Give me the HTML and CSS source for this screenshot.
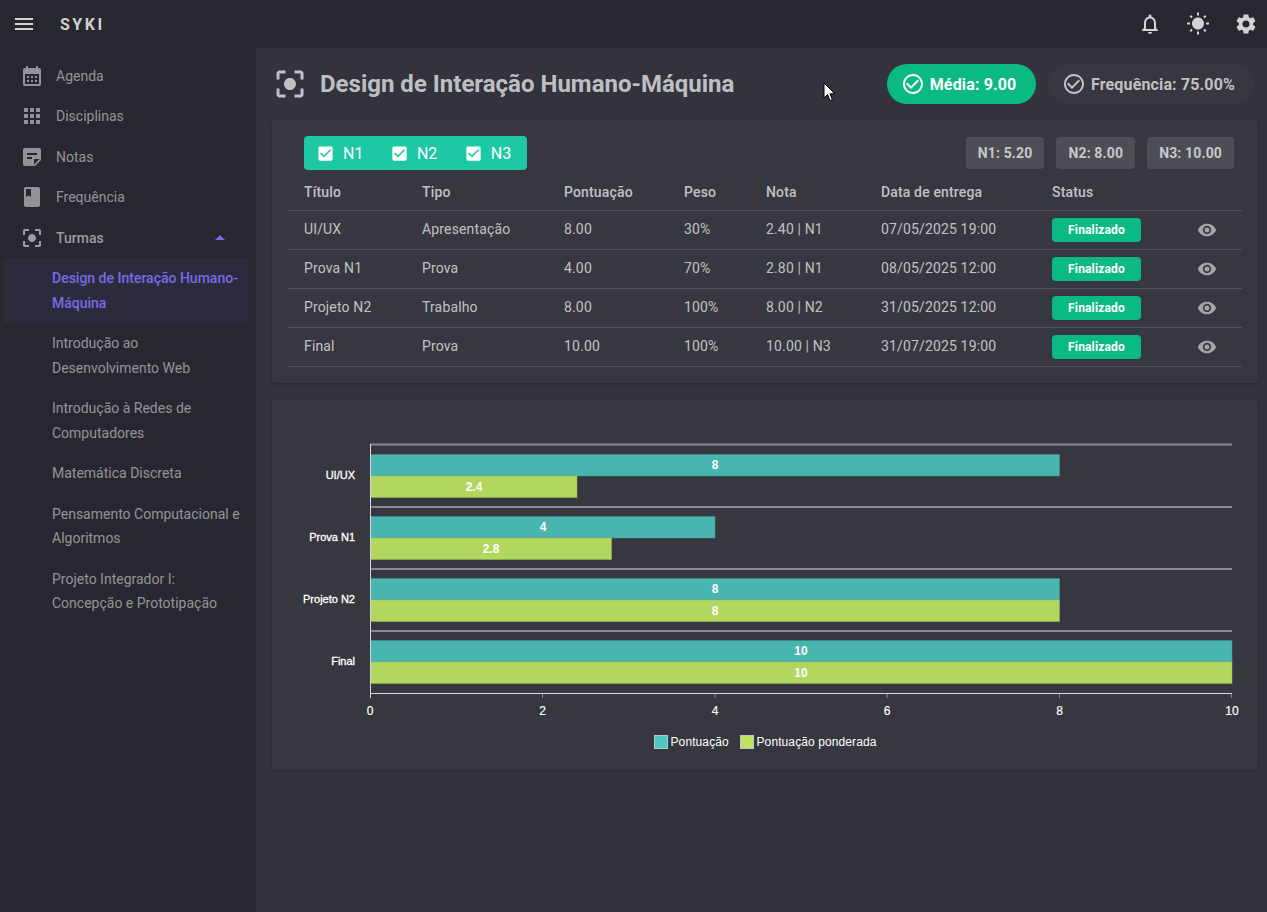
FILE: index.html
```html
<!DOCTYPE html>
<html lang="pt-BR">
  <head>
    <meta charset="UTF-8" />
    <meta name="viewport" content="width=device-width, initial-scale=1.0" />
    <title>Syki</title>
    <link rel="stylesheet" href="styles.css">
  </head>
  <body>
    <header class="appbar">
      <svg class="icon menu-icon" viewBox="0 0 24 24"><path d="M3 18h18v-2H3v2zm0-5h18v-2H3v2zm0-7v2h18V6H3z"/></svg>
      <span class="brand">SYKI</span>
      <div class="appbar-actions">
        <svg class="icon" viewBox="0 0 24 24"><path d="M12 22c1.1 0 2-.9 2-2h-4c0 1.1.9 2 2 2zm6-6v-5c0-3.07-1.63-5.64-4.5-6.32V4c0-.83-.67-1.5-1.5-1.5s-1.5.67-1.5 1.5v.68C7.64 5.36 6 7.92 6 11v5l-2 2v1h16v-1l-2-2zm-2 1H8v-6c0-2.48 1.51-4.5 4-4.5s4 2.02 4 4.5v6z"/></svg>
        <svg class="icon" viewBox="0 0 24 24"><path d="M6.76 4.84l-1.8-1.79-1.41 1.41 1.79 1.79 1.42-1.41zM4 10.5H1v2h3v-2zm9-9.95h-2V3.5h2V.55zm7.45 3.91l-1.41-1.41-1.79 1.79 1.41 1.41 1.79-1.79zm-3.21 13.7l1.79 1.8 1.41-1.41-1.8-1.79-1.4 1.4zM20 10.5v2h3v-2h-3zm-8-5c-3.31 0-6 2.69-6 6s2.69 6 6 6 6-2.69 6-6-2.69-6-6-6zm-1 16.95h2V19.5h-2v2.95zm-7.45-3.91l1.41 1.41 1.79-1.8-1.41-1.41-1.79 1.8z"/></svg>
        <svg class="icon" viewBox="0 0 24 24"><path d="M19.14 12.94c.04-.3.06-.61.06-.94 0-.32-.02-.64-.07-.94l2.03-1.58c.18-.14.23-.41.12-.61l-1.92-3.32c-.12-.22-.37-.29-.59-.22l-2.39.96c-.5-.38-1.03-.7-1.62-.94l-.36-2.54c-.04-.24-.24-.41-.48-.41h-3.84c-.24 0-.43.17-.47.41l-.36 2.54c-.59.24-1.13.57-1.62.94l-2.39-.96c-.22-.08-.47 0-.59.22L2.74 8.87c-.12.21-.08.47.12.61l2.03 1.58c-.05.3-.09.63-.09.94s.02.64.07.94l-2.03 1.58c-.18.14-.23.41-.12.61l1.92 3.32c.12.22.37.29.59.22l2.39-.96c.5.38 1.03.7 1.62.94l.36 2.54c.05.24.24.41.48.41h3.84c.24 0 .44-.17.47-.41l.36-2.54c.59-.24 1.13-.56 1.62-.94l2.39.96c.22.08.47 0 .59-.22l1.92-3.32c.12-.22.07-.47-.12-.61l-2.01-1.58zM12 15.6c-1.98 0-3.6-1.62-3.6-3.6s1.62-3.6 3.6-3.6 3.6 1.62 3.6 3.6-1.62 3.6-3.6 3.6z"/></svg>
      </div>
    </header>

    <div class="layout">
      <nav class="sidebar">
        <a class="nav-item">
          <svg class="icon nav-icon" viewBox="0 0 24 24"><path d="M19 4h-1V2h-2v2H8V2H6v2H5c-1.11 0-1.99.9-1.99 2L3 20c0 1.1.89 2 2 2h14c1.1 0 2-.9 2-2V6c0-1.1-.9-2-2-2zm0 16H5V10h14v10zM9 14H7v-2h2v2zm4 0h-2v-2h2v2zm4 0h-2v-2h2v2zm-8 4H7v-2h2v2zm4 0h-2v-2h2v2zm4 0h-2v-2h2v2z"/></svg>
          Agenda
        </a>
        <a class="nav-item">
          <svg class="icon nav-icon" viewBox="0 0 24 24"><path d="M4 8h4V4H4v4zm6 12h4v-4h-4v4zm-6 0h4v-4H4v4zm0-6h4v-4H4v4zm6 0h4v-4h-4v4zm6-10v4h4V4h-4zm-6 4h4V4h-4v4zm6 6h4v-4h-4v4zm0 6h4v-4h-4v4z"/></svg>
          Disciplinas
        </a>
        <a class="nav-item">
          <svg class="icon nav-icon" viewBox="0 0 24 24"><path d="M19 3H4.99C3.89 3 3 3.9 3 5l.01 14c0 1.1.89 2 1.99 2h10l6-6V5c0-1.1-.9-2-2-2zM7 8h10v2H7V8zm5 6H7v-2h5v2zm2 5.5V14h5.5L14 19.5z"/></svg>
          Notas
        </a>
        <a class="nav-item">
          <svg class="icon nav-icon" viewBox="0 0 24 24"><path d="M18 2H6c-1.1 0-2 .9-2 2v16c0 1.1.9 2 2 2h12c1.1 0 2-.9 2-2V4c0-1.1-.9-2-2-2zM6 4h5v8l-2.5-1.5L6 12V4z"/></svg>
          Frequência
        </a>
        <a class="nav-item nav-group">
          <svg class="icon nav-icon" viewBox="0 0 24 24"><path d="M5 15H3v4c0 1.1.9 2 2 2h4v-2H5v-4zM5 5h4V3H5c-1.1 0-2 .9-2 2v4h2V5zm14-2h-4v2h4v4h2V5c0-1.1-.9-2-2-2zm0 16h-4v2h4c1.1 0 2-.9 2-2v-4h-2v4zM12 8c-2.21 0-4 1.79-4 4s1.79 4 4 4 4-1.79 4-4-1.79-4-4-4z"/></svg>
          Turmas
          <span class="caret"></span>
        </a>
        <a class="sub-item active">Design de Interação Humano-Máquina</a>
        <a class="sub-item">Introdução ao Desenvolvimento Web</a>
        <a class="sub-item">Introdução à Redes de Computadores</a>
        <a class="sub-item">Matemática Discreta</a>
        <a class="sub-item">Pensamento Computacional e Algoritmos</a>
        <a class="sub-item">Projeto Integrador I: Concepção e Prototipação</a>
      </nav>

      <main class="content">
        <div class="page-head">
          <svg class="icon title-icon" viewBox="0 0 24 24"><path d="M5 15H3v4c0 1.1.9 2 2 2h4v-2H5v-4zM5 5h4V3H5c-1.1 0-2 .9-2 2v4h2V5zm14-2h-4v2h4v4h2V5c0-1.1-.9-2-2-2zm0 16h-4v2h4c1.1 0 2-.9 2-2v-4h-2v4zM12 8c-2.21 0-4 1.79-4 4s1.79 4 4 4 4-1.79 4-4-1.79-4-4-4z"/></svg>
          <h1>Design de Interação Humano-Máquina</h1>
          <div class="pill pill-green">
            <svg class="icon" viewBox="0 0 24 24"><path d="M16.59 7.58L10 14.17l-3.59-3.58L5 12l5 5 8-8zM12 2C6.48 2 2 6.48 2 12s4.48 10 10 10 10-4.48 10-10S17.52 2 12 2zm0 18c-4.42 0-8-3.58-8-8s3.58-8 8-8 8 3.58 8 8-3.58 8-8 8z"/></svg>
            Média: 9.00
          </div>
          <div class="pill pill-dark">
            <svg class="icon" viewBox="0 0 24 24"><path d="M16.59 7.58L10 14.17l-3.59-3.58L5 12l5 5 8-8zM12 2C6.48 2 2 6.48 2 12s4.48 10 10 10 10-4.48 10-10S17.52 2 12 2zm0 18c-4.42 0-8-3.58-8-8s3.58-8 8-8 8 3.58 8 8-3.58 8-8 8z"/></svg>
            Frequência: 75.00%
          </div>
        </div>

        <section class="card table-card">
          <div class="table-tools">
            <div class="checks">
              <span class="check"><svg class="icon" viewBox="0 0 24 24"><path d="M19 3H5c-1.11 0-2 .9-2 2v14c0 1.1.89 2 2 2h14c1.11 0 2-.9 2-2V5c0-1.1-.89-2-2-2zm-9 14l-5-5 1.41-1.41L10 14.17l7.59-7.59L19 8l-9 9z"/></svg>N1</span>
              <span class="check"><svg class="icon" viewBox="0 0 24 24"><path d="M19 3H5c-1.11 0-2 .9-2 2v14c0 1.1.89 2 2 2h14c1.11 0 2-.9 2-2V5c0-1.1-.89-2-2-2zm-9 14l-5-5 1.41-1.41L10 14.17l7.59-7.59L19 8l-9 9z"/></svg>N2</span>
              <span class="check"><svg class="icon" viewBox="0 0 24 24"><path d="M19 3H5c-1.11 0-2 .9-2 2v14c0 1.1.89 2 2 2h14c1.11 0 2-.9 2-2V5c0-1.1-.89-2-2-2zm-9 14l-5-5 1.41-1.41L10 14.17l7.59-7.59L19 8l-9 9z"/></svg>N3</span>
            </div>
            <div class="scores">
              <span class="score">N1: 5.20</span>
              <span class="score">N2: 8.00</span>
              <span class="score">N3: 10.00</span>
            </div>
          </div>

          <table>
            <colgroup>
              <col class="col-title"><col class="col-type"><col class="col-points"><col class="col-weight"><col class="col-grade"><col class="col-date"><col class="col-status"><col>
            </colgroup>
            <thead>
              <tr>
                <th>Título</th><th>Tipo</th><th>Pontuação</th><th>Peso</th><th>Nota</th><th>Data de entrega</th><th>Status</th><th></th>
              </tr>
            </thead>
            <tbody>
              <tr>
                <td>UI/UX</td><td>Apresentação</td><td>8.00</td><td>30%</td><td>2.40 | N1</td><td>07/05/2025 19:00</td>
                <td class="status"><span class="badge">Finalizado</span></td>
                <td class="eye"><svg class="icon" viewBox="0 0 24 24"><path d="M12 4.5C7 4.5 2.73 7.61 1 12c1.73 4.39 6 7.5 11 7.5s9.27-3.11 11-7.5c-1.73-4.39-6-7.5-11-7.5zM12 17c-2.76 0-5-2.24-5-5s2.24-5 5-5 5 2.24 5 5-2.24 5-5 5zm0-8c-1.66 0-3 1.34-3 3s1.34 3 3 3 3-1.34 3-3-1.34-3-3-3z"/></svg></td>
              </tr>
              <tr>
                <td>Prova N1</td><td>Prova</td><td>4.00</td><td>70%</td><td>2.80 | N1</td><td>08/05/2025 12:00</td>
                <td class="status"><span class="badge">Finalizado</span></td>
                <td class="eye"><svg class="icon" viewBox="0 0 24 24"><path d="M12 4.5C7 4.5 2.73 7.61 1 12c1.73 4.39 6 7.5 11 7.5s9.27-3.11 11-7.5c-1.73-4.39-6-7.5-11-7.5zM12 17c-2.76 0-5-2.24-5-5s2.24-5 5-5 5 2.24 5 5-2.24 5-5 5zm0-8c-1.66 0-3 1.34-3 3s1.34 3 3 3 3-1.34 3-3-1.34-3-3-3z"/></svg></td>
              </tr>
              <tr>
                <td>Projeto N2</td><td>Trabalho</td><td>8.00</td><td>100%</td><td>8.00 | N2</td><td>31/05/2025 12:00</td>
                <td class="status"><span class="badge">Finalizado</span></td>
                <td class="eye"><svg class="icon" viewBox="0 0 24 24"><path d="M12 4.5C7 4.5 2.73 7.61 1 12c1.73 4.39 6 7.5 11 7.5s9.27-3.11 11-7.5c-1.73-4.39-6-7.5-11-7.5zM12 17c-2.76 0-5-2.24-5-5s2.24-5 5-5 5 2.24 5 5-2.24 5-5 5zm0-8c-1.66 0-3 1.34-3 3s1.34 3 3 3 3-1.34 3-3-1.34-3-3-3z"/></svg></td>
              </tr>
              <tr>
                <td>Final</td><td>Prova</td><td>10.00</td><td>100%</td><td>10.00 | N3</td><td>31/07/2025 19:00</td>
                <td class="status"><span class="badge">Finalizado</span></td>
                <td class="eye"><svg class="icon" viewBox="0 0 24 24"><path d="M12 4.5C7 4.5 2.73 7.61 1 12c1.73 4.39 6 7.5 11 7.5s9.27-3.11 11-7.5c-1.73-4.39-6-7.5-11-7.5zM12 17c-2.76 0-5-2.24-5-5s2.24-5 5-5 5 2.24 5 5-2.24 5-5 5zm0-8c-1.66 0-3 1.34-3 3s1.34 3 3 3 3-1.34 3-3-1.34-3-3-3z"/></svg></td>
              </tr>
            </tbody>
          </table>
        </section>

        <section class="card chart-card">
          <!-- drawn in the card's own coordinates: card starts at 272,399 on the page -->
          <svg class="chart" viewBox="0 0 986 371" width="986" height="371">
            <g class="grid">
              <line x1="98" y1="45.5" x2="960" y2="45.5"/>
              <line x1="98" y1="108" x2="960" y2="108"/>
              <line x1="98" y1="170" x2="960" y2="170"/>
              <line x1="98" y1="232" x2="960" y2="232"/>
            </g>

            <rect class="bar-a" x="98.5" y="55.5" width="689" height="21.5"/>
            <rect class="bar-b" x="98.5" y="77" width="206.5" height="21.5"/>
            <rect class="bar-a" x="98.5" y="117.5" width="344.5" height="21.5"/>
            <rect class="bar-b" x="98.5" y="139" width="241" height="21.5"/>
            <rect class="bar-a" x="98.5" y="179.5" width="689" height="21.5"/>
            <rect class="bar-b" x="98.5" y="201" width="689" height="21.5"/>
            <rect class="bar-a" x="98.5" y="241.5" width="861.5" height="21.5"/>
            <rect class="bar-b" x="98.5" y="263" width="861.5" height="21.5"/>

            <g class="bar-label">
              <text x="443" y="70">8</text>
              <text x="202" y="92">2.4</text>
              <text x="271" y="132">4</text>
              <text x="219" y="154">2.8</text>
              <text x="443" y="194">8</text>
              <text x="443" y="216">8</text>
              <text x="529" y="256">10</text>
              <text x="529" y="278">10</text>
            </g>

            <g class="y-label">
              <text x="83" y="80">UI/UX</text>
              <text x="83" y="142">Prova N1</text>
              <text x="83" y="204">Projeto N2</text>
              <text x="83" y="266">Final</text>
            </g>

            <g class="axis">
              <line x1="98.5" y1="45" x2="98.5" y2="299"/>
              <line x1="98" y1="294.5" x2="960" y2="294.5"/>
              <line class="tick" x1="270.5" y1="295" x2="270.5" y2="299"/>
              <line class="tick" x1="443" y1="295" x2="443" y2="299"/>
              <line class="tick" x1="615" y1="295" x2="615" y2="299"/>
              <line class="tick" x1="787.5" y1="295" x2="787.5" y2="299"/>
              <line class="tick" x1="959.5" y1="295" x2="959.5" y2="299"/>
            </g>

            <g class="x-label">
              <text x="98" y="315.5">0</text>
              <text x="270.5" y="315.5">2</text>
              <text x="443" y="315.5">4</text>
              <text x="615" y="315.5">6</text>
              <text x="787.5" y="315.5">8</text>
              <text x="960" y="315.5">10</text>
            </g>

            <rect class="swatch-a" x="382.5" y="336.5" width="13" height="13"/>
            <text class="legend" x="398.5" y="347">Pontuação</text>
            <rect class="swatch-b" x="468.5" y="336.5" width="13" height="13"/>
            <text class="legend" x="484.5" y="347">Pontuação ponderada</text>
          </svg>
        </section>
      </main>
    </div>

    <svg class="cursor" viewBox="0 0 13 20" width="13" height="20"><path d="M1 1v15l3.6-3.4 2.5 6 2.3-1-2.5-5.8h5z"/></svg>
  </body>
</html>
```

FILE: styles.css
```css
* {
  padding: 0;
  margin: 0;
  box-sizing: border-box;
}

body {
  width: 1267px;
  height: 912px;
  overflow: hidden;
  background-color: #32333d;
  color: rgba(255, 255, 255, 0.7);
  font-family: Roboto, sans-serif;
  font-size: 14px;
}

.icon {
  display: block;
  width: 24px;
  height: 24px;
  fill: currentColor;
  flex-shrink: 0;
}

/* top bar */
.appbar {
  display: flex;
  align-items: center;
  height: 48px;
  padding: 0 9px 0 12px;
  background-color: #27272f;
  color: rgba(255, 255, 255, 0.8);
}

.brand {
  margin-left: 24px;
  font-size: 16px;
  font-weight: 700;
  letter-spacing: 2.5px;
}

.appbar-actions {
  display: flex;
  gap: 24px;
  margin-left: auto;
}

/* sidebar */
.layout {
  display: flex;
  height: 864px;
}

.sidebar {
  display: flex;
  flex-direction: column;
  width: 256px;
  padding: 7.6px 8px 0 4px;
  background-color: #27272f;
  color: rgba(255, 255, 255, 0.5);
}

.nav-item {
  display: flex;
  align-items: center;
  height: 40.5px;
  padding-left: 16px;
  gap: 12px;
  line-height: 24px;
}

.nav-icon {
  width: 24px;
  height: 24px;
}

.nav-group {
  font-weight: 500;
  color: rgba(255, 255, 255, 0.55);
}

.caret {
  width: 0;
  height: 0;
  margin-left: auto;
  margin-right: 23px;
  border-left: 5px solid transparent;
  border-right: 5px solid transparent;
  border-bottom: 5px solid #776be7;
}

.sub-item {
  padding: 8px 0 8px 48px;
  line-height: 24.5px;
  border-radius: 4px;
}

.sub-item.active {
  background-color: rgba(119, 107, 231, 0.08);
  color: #776be7;
  font-weight: 500;
}

/* main area */
.content {
  flex: 1;
  padding: 16px 9px 0 16px;
}

.page-head {
  display: flex;
  align-items: center;
  width: 986px;
  height: 40px;
  margin-bottom: 16px;
}

.title-icon {
  width: 36px;
  height: 36px;
  margin-right: 12px;
}

h1 {
  flex: 1;
  font-size: 24px;
  font-weight: 700;
  line-height: 40px;
}

.pill {
  display: flex;
  align-items: center;
  gap: 4.5px;
  height: 40px;
  padding: 0 20px 0 14px;
  border-radius: 20px;
  font-size: 16px;
  font-weight: 700;
  letter-spacing: 0.15px;
}

.pill-green {
  background-color: #0bba83;
  color: #fff;
  margin-right: 12px;
}

.pill-dark {
  background-color: #373740;
  margin-right: 3px;
}

.card {
  width: 986px;
  background-color: #373740;
  border-radius: 4px;
  box-shadow: 0 1px 3px rgba(0, 0, 0, 0.25);
}

.table-card {
  height: 263px;
  padding: 16px;
  margin-bottom: 16px;
}

.table-tools {
  display: flex;
  align-items: center;
  justify-content: space-between;
  height: 34px;
  padding: 0 8px 0 16px;
}

.checks {
  display: flex;
  align-items: center;
  gap: 26.5px;
  height: 34px;
  padding: 0 16px 0 12px;
  background-color: #1ec8a5;
  border-radius: 4px;
  color: #fff;
  font-size: 16px;
}

.check {
  display: flex;
  align-items: center;
  gap: 8px;
}

.check .icon {
  width: 19px;
  height: 19px;
}

.scores {
  display: flex;
  gap: 12px;
}

.score {
  display: flex;
  align-items: center;
  height: 32px;
  padding: 0 12px;
  background-color: #4d4d55;
  border-radius: 4px;
  font-weight: 700;
  letter-spacing: 0.15px;
}

table {
  width: 954px;
  table-layout: fixed;
  border-collapse: collapse;
  letter-spacing: 0.15px;
}

.col-title { width: 134px; }
.col-type { width: 142px; }
.col-points { width: 120px; }
.col-weight { width: 82px; }
.col-grade { width: 115px; }
.col-date { width: 171px; }
.col-status { width: 130px; }

th,
td {
  text-align: left;
  border-bottom: 1px solid rgba(255, 255, 255, 0.12);
}

th {
  height: 40px;
  padding-top: 4px;
  font-weight: 500;
}

td {
  height: 39px;
  padding-bottom: 2px;
}

td.status,
td.eye {
  padding-bottom: 0;
}

th:first-child,
td:first-child {
  padding-left: 16px;
}

.badge {
  display: flex;
  align-items: center;
  justify-content: center;
  width: 89px;
  height: 24px;
  background-color: #0bba83;
  border-radius: 4px;
  color: #fff;
  font-size: 12px;
  font-weight: 700;
}

.eye .icon {
  width: 20px;
  height: 20px;
  margin-left: 15px;
  color: rgba(255, 255, 255, 0.55);
}

/* chart */
.chart-card {
  height: 371px;
}

.chart {
  display: block;
  font-family: "Liberation Sans", sans-serif;
}

.grid line {
  stroke: #88888d;
  stroke-width: 2;
}

.axis line {
  stroke: #d8d8da;
  stroke-width: 1;
}

.axis .tick {
  stroke: #88888d;
}

.bar-a {
  fill: #49b5af;
  stroke: #3f9a98;
  stroke-opacity: 0.5;
  stroke-width: 1;
}

.bar-b {
  fill: #b2d75f;
  stroke: #9abb57;
  stroke-opacity: 0.5;
  stroke-width: 1;
}

.bar-label text,
.x-label text {
  fill: #fff;
  font-size: 12px;
  font-weight: 700;
  text-anchor: middle;
}

.x-label text {
  font-weight: 400;
  stroke: #fff;
  stroke-width: 0.2;
}

.y-label text {
  fill: #fff;
  stroke: #fff;
  stroke-width: 0.3;
  font-size: 11px;
  text-anchor: end;
}

.legend {
  fill: #fff;
  font-size: 12px;
  letter-spacing: 0.1px;
}

.swatch-a {
  fill: #4bc8c0;
  stroke: #c5c5c8;
}

.swatch-b {
  fill: #bfe45f;
  stroke: #c5c5c8;
}

/* mouse pointer caught in the capture */
.cursor {
  position: absolute;
  left: 823px;
  top: 82px;
  fill: #fff;
  stroke: #000;
  stroke-width: 1;
}
```
